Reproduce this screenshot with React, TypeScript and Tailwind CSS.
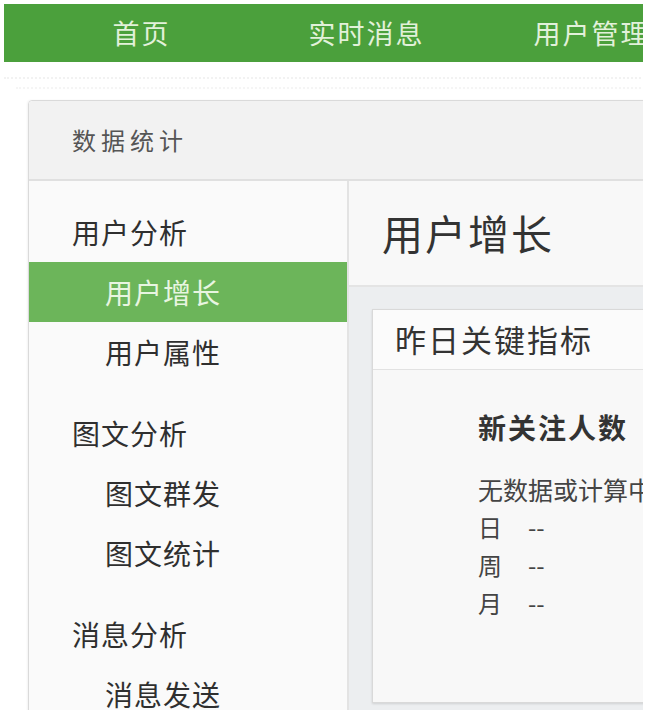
import React from "react";

const font = {
  fontFamily: '"Noto Sans CJK SC", "Noto Sans", sans-serif',
};

const navItems = ["首页", "实时消息", "用户管理"];

const groups = [
  { title: "用户分析", items: ["用户增长", "用户属性"] },
  { title: "图文分析", items: ["图文群发", "图文统计"] },
  { title: "消息分析", items: ["消息发送"] },
];

function Sidebar() {
  return (
    <div className="w-[320px] shrink-0 bg-[#fafafa] border-r-2 border-[#e3e3e3] pt-[21px] pb-[20px]">
      {groups.map((g, gi) => (
        <div key={g.title} className={gi > 0 ? "mt-[21px]" : ""}>
          <div className="h-[60px] flex items-center pl-[43px] text-[28px] tracking-[1px] text-[#2f2f2f]">
            {g.title}
          </div>
          {g.items.map((item) => {
            const active = item === "用户增长";
            return (
              <div
                key={item}
                className={
                  active
                    ? "h-[60px] flex items-center pl-[76px] text-[28px] tracking-[1px] bg-[#6cb55a] text-[#e8f5e1]"
                    : "h-[60px] flex items-center pl-[76px] text-[28px] tracking-[1px] text-[#2f2f2f]"
                }
              >
                {item}
              </div>
            );
          })}
        </div>
      ))}
    </div>
  );
}

function MetricCard() {
  return (
    <div className="w-[330px] border border-[#d9d9d9] bg-[#f8f8f8] shadow-[0_1px_2px_rgba(0,0,0,0.12)]">
      <div className="h-[60px] flex items-center pl-[22px] bg-[#fbfbfb] border-b border-[#e2e2e2] text-[31px] tracking-[2px] text-[#333] whitespace-nowrap">
        昨日关键指标
      </div>
      <div className="pl-[105px] pt-[40px] h-[332px] text-[#444] whitespace-nowrap">
        <div className="text-[28px] font-bold tracking-[2px] text-[#333] leading-[34px]">新关注人数</div>
        <div className="mt-[26px] text-[25px] leading-[38px]">无数据或计算中</div>
        <div className="text-[24px] leading-[38px] flex">
          <span className="w-[50px]">日</span>
          <span>--</span>
        </div>
        <div className="text-[24px] leading-[38px] flex">
          <span className="w-[50px]">周</span>
          <span>--</span>
        </div>
        <div className="text-[24px] leading-[38px] flex">
          <span className="w-[50px]">月</span>
          <span>--</span>
        </div>
      </div>
    </div>
  );
}

export default function App() {
  return (
    <div className="min-h-screen bg-white" style={font}>
      <div className="ml-1 pt-1 w-[639px]">
        <div className="h-[706px] overflow-hidden bg-white">
          <div className="w-[720px]">
            {/* Top nav */}
            <nav className="h-[58px] bg-[#4ba03c] flex items-center pl-[25px]">
              {navItems.map((n) => (
                <div
                  key={n}
                  className="w-[225px] shrink-0 text-center text-[27px] tracking-[2px] text-[#e2f1da] whitespace-nowrap"
                >
                  {n}
                </div>
              ))}
            </nav>

            {/* faint dotted texture */}
            <div className="h-[38px] pt-[15px]">
              <div className="border-t-2 border-dotted border-[#f2f2f2]" />
              <div className="mt-[8px] border-t-2 border-dotted border-[#f5f5f5] ml-[12px]" />
            </div>

            {/* Panel */}
            <div className="ml-[24px] border border-[#dadada] rounded-tl-[4px] shadow-[-1px_0_2px_rgba(0,0,0,0.05)]">
              <div className="h-[80px] bg-[#f2f2f2] border-b-2 border-[#e0e0e0] rounded-tl-[4px] flex items-center pl-[43px] text-[24px] tracking-[5px] text-[#555]">
                数据统计
              </div>
              <div className="flex">
                <Sidebar />
                <div className="flex-1 min-w-0">
                  <div className="h-[106px] bg-[#f8f8f8] border-b-2 border-[#e4e4e4] flex items-center pl-[33px] text-[41px] tracking-[2px] text-[#333] whitespace-nowrap">
                    用户增长
                  </div>
                  <div className="bg-[#eceef0] pl-[23px] pt-[22px] pb-[8px]">
                    <MetricCard />
                  </div>
                </div>
              </div>
            </div>
          </div>
        </div>
      </div>
    </div>
  );
}
